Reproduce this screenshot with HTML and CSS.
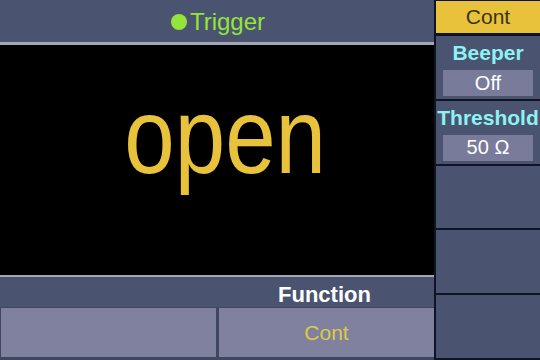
FILE: index.html
```html
<!DOCTYPE html>
<html>
<head>
<meta charset="utf-8">
<link rel="stylesheet" href="styles.css">
</head>
<body>
<div class="screen">
  <div class="main">
    <div class="topbar"><span class="dot"></span><span class="title">Trigger</span></div>
    <div class="rule"></div>
    <div class="display"><span class="reading">open</span></div>
    <div class="rule rule-thin"></div>
    <div class="funcbar"><span class="func-label">Function</span></div>
    <div class="buttons">
      <div class="btn"></div>
      <div class="btn"><span class="btn-text">Cont</span></div>
    </div>
  </div>
  <div class="side">
    <div class="mode">Cont</div>
    <div class="panel">
      <div class="panel-label">Beeper</div>
      <div class="panel-value">Off</div>
    </div>
    <div class="panel">
      <div class="panel-label">Threshold</div>
      <div class="panel-value">50 Ω</div>
    </div>
    <div class="panel"></div>
    <div class="panel"></div>
    <div class="panel"></div>
  </div>
</div>
</body>
</html>
```
FILE: styles.css
```css
* { box-sizing: border-box; }
html, body { margin: 0; padding: 0; }
body {
  width: 540px;
  height: 360px;
  overflow: hidden;
  background: #0e1424;
  font-family: "Liberation Sans", Arial, sans-serif;
}
.screen {
  display: grid;
  grid-template-columns: 434px 1fr;
  width: 540px;
  height: 360px;
}
.main {
  display: flex;
  flex-direction: column;
  background: #000;
}
.topbar {
  height: 42px;
  background: #4a5370;
  display: flex;
  align-items: center;
  justify-content: center;
  gap: 3px;
  padding-top: 2px;
  padding-left: 2px;
}
.dot {
  width: 16px;
  height: 16px;
  border-radius: 50%;
  background: #94e43a;
}
.title {
  color: #94e43a;
  font-size: 24px;
}
.rule {
  height: 3px;
  background: #a4a6b0;
}
.rule-thin { height: 2px; }
.display {
  flex: 1;
  background: #000;
  display: flex;
  align-items: center;
  justify-content: center;
}
.reading {
  color: #e8c23a;
  font-size: 108px;
  display: inline-block;
  transform: scaleX(0.84);
  margin-top: -49px;
  margin-left: 16px;
}
.funcbar {
  height: 30px;
  background: #4a5370;
  display: flex;
  align-items: center;
  padding-left: 278px;
  padding-top: 6px;
}
.func-label {
  color: #fff;
  font-weight: bold;
  font-size: 22px;
}
.buttons {
  height: 53px;
  background: #3e4660;
  display: grid;
  grid-template-columns: 215px 1fr;
  gap: 3px;
  padding: 1px 0 3px 1px;
}
.btn {
  background: #7f819f;
  display: flex;
  align-items: center;
  justify-content: center;
}
.btn-text {
  color: #dccb45;
  font-size: 21px;
}
.side {
  display: flex;
  flex-direction: column;
  gap: 2px;
  padding: 1px 0 2px 2px;
}
.mode {
  height: 32px;
  margin-bottom: 1px;
  background: #e8c23a;
  color: #3a3214;
  font-size: 21px;
  display: flex;
  align-items: center;
  justify-content: center;
}
.panel {
  flex: 1;
  background: #4a5370;
  display: flex;
  flex-direction: column;
  align-items: center;
  padding-top: 5px;
}
.panel-label {
  color: #8ef2f2;
  font-weight: bold;
  font-size: 21px;
  line-height: 24px;
  white-space: nowrap;
}
.panel-value {
  margin-top: 5px;
  width: 90px;
  height: 26px;
  background: #787b9a;
  color: #fff;
  font-size: 20px;
  display: flex;
  align-items: center;
  justify-content: center;
}
```
